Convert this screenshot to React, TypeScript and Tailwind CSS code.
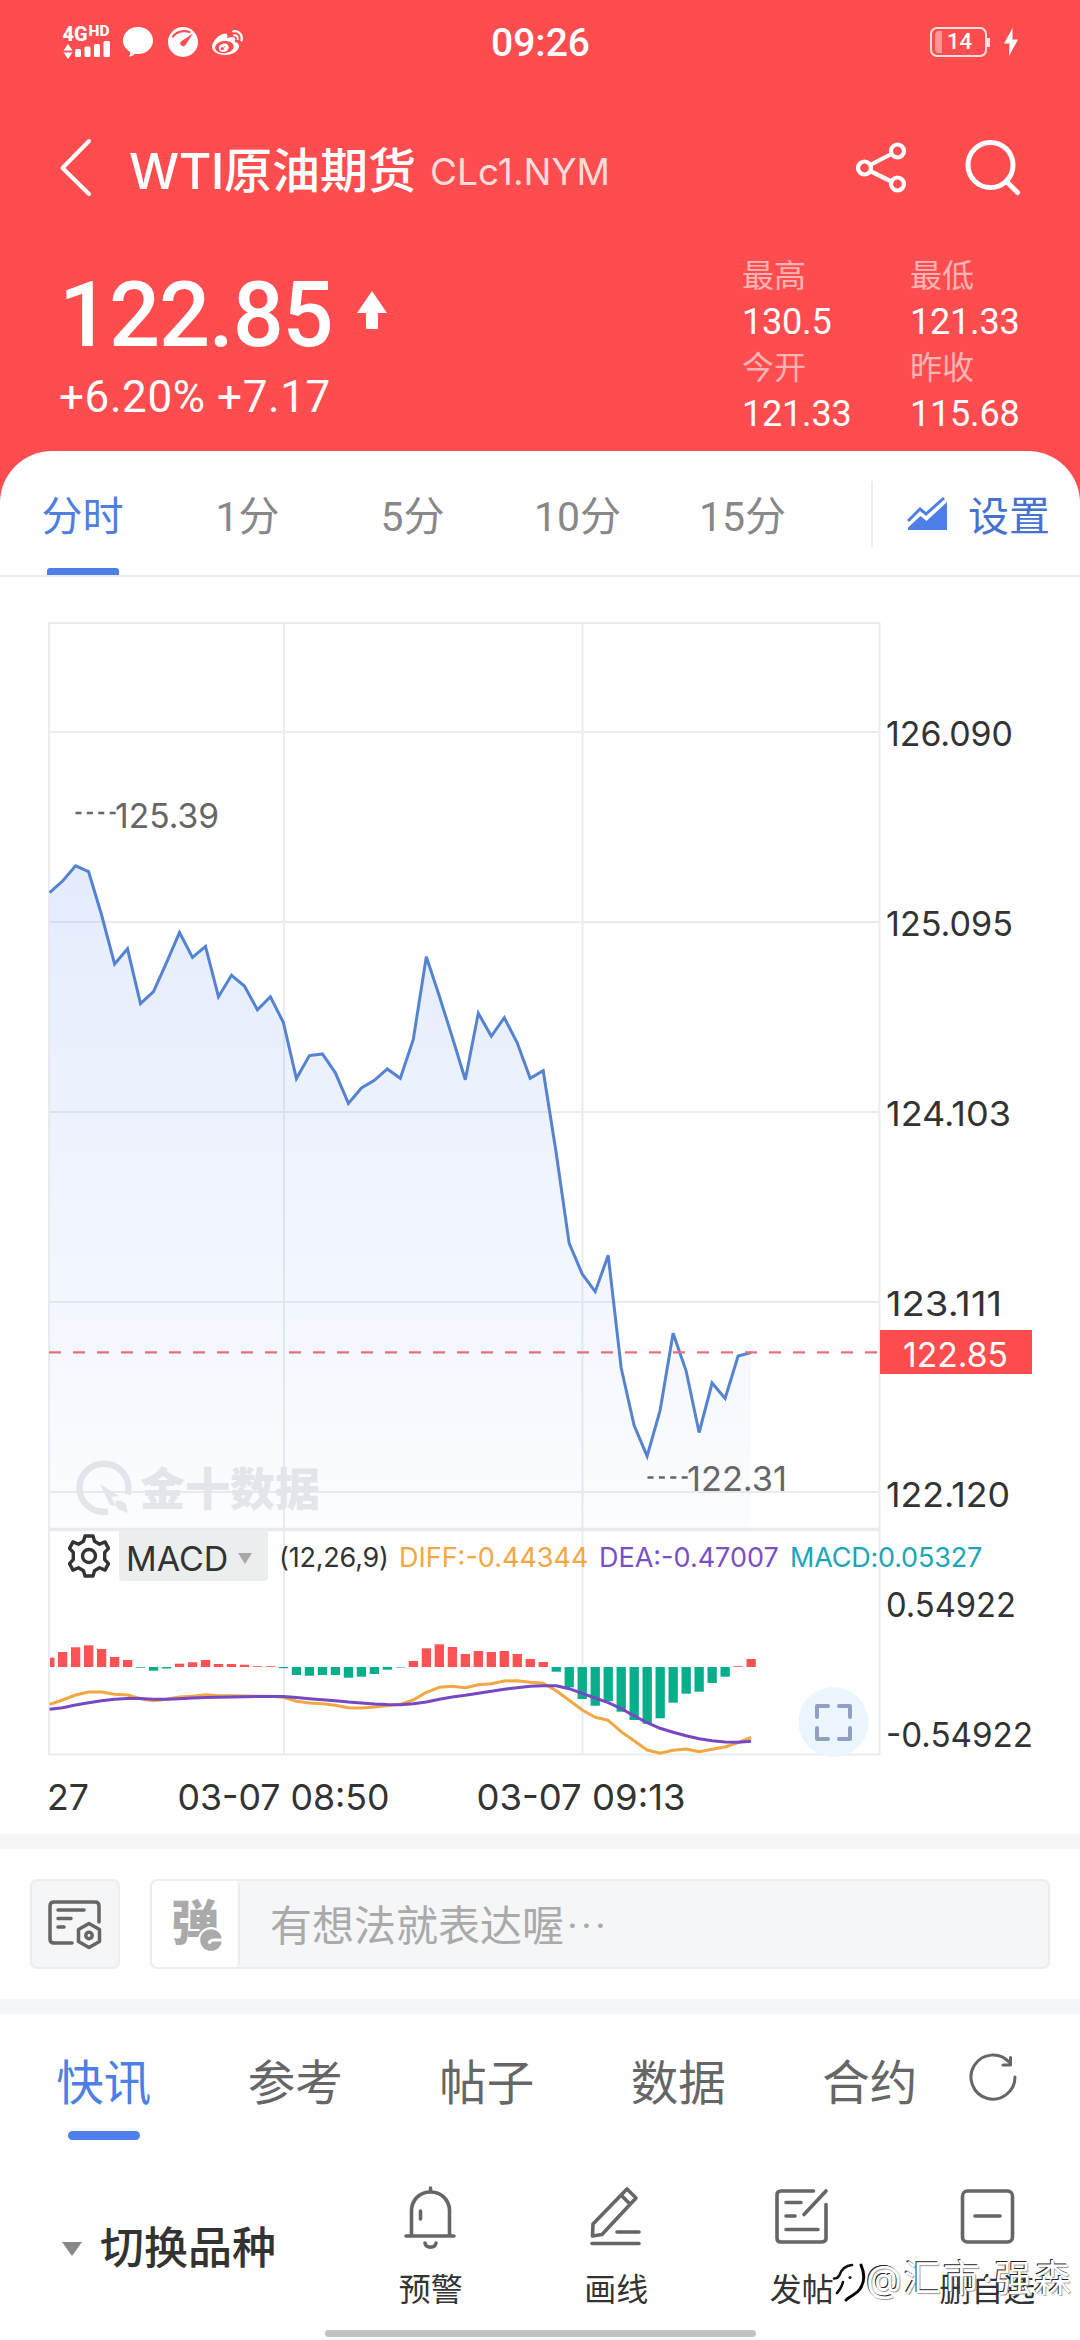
import React from "react";
import { FaWeibo } from "react-icons/fa";

const STEP = 12.99;
const X0 = 49.6;
const BASE = 1667;

const prices = [
    892.7, 881, 865.8, 871.7, 915, 964, 948.8, 1003.6, 991.5, 962.6, 932.6, 957.4, 946.4, 996.7,
    975.3, 986, 1009.8, 996.7, 1022.5, 1078.6, 1055.6, 1053.9, 1072.8, 1103.4, 1088, 1080.4, 1069,
    1078.3, 1039.4, 956.7, 996, 1037.3, 1079.7, 1013.2, 1036.3, 1017.7, 1042.8, 1078.3, 1070.7,
    1153, 1243.4, 1273.9, 1291.7, 1255.3, 1368, 1425.3, 1456.2, 1410.3, 1333.2, 1370.8, 1432.5,
    1383, 1398.5, 1356.1, 1352.6,
];

const bars = [
    9.3, 15, 19.7, 21.7, 18, 10, 7, -0.7, -3.7, -1.5, 3.3, 4.7, 7, 3, 3, 2.3, 0.8, 0.8, -1.2, -8,
    -8.7, -8, -8, -10.7, -9.7, -7, -2.7, -0.5, 6, 18.7, 22.7, 20, 13, 16, 15, 16, 13, 8, 5, -4.7,
    -20.3, -32, -38.7, -34.3, -44.7, -53, -56.7, -51.3, -35.7, -26.7, -24.7, -16, -9.7, 0.8, 8,
];

const diff = [
    1704.3, 1700, 1695, 1692, 1692, 1694.3, 1695, 1698.7, 1700.7, 1699.3, 1697, 1696.3, 1694.7,
    1695.7, 1695.7, 1696, 1696.3, 1696.3, 1697.3, 1701.3, 1703, 1703.7, 1705.3, 1707.7, 1708, 1707,
    1705.7, 1704.3, 1700, 1692.3, 1687.3, 1686.3, 1687.7, 1684.7, 1683.7, 1681, 1680.7, 1682.3,
    1683.3, 1690.7, 1700.3, 1710, 1717.3, 1720.3, 1731.7, 1740.7, 1750, 1753.3, 1750.3, 1749,
    1751.7, 1749.3, 1747, 1742.7, 1737.3,
];

const dea = [
    1709.3, 1707.7, 1705, 1702.7, 1700.7, 1699.3, 1698.5, 1698.6, 1699.3, 1699.3, 1698.7, 1698,
    1697.5, 1697.3, 1697, 1696.7, 1696.5, 1696.4, 1696.5, 1697.5, 1698.7, 1699.7, 1700.7, 1702,
    1703, 1704, 1704.5, 1704.7, 1703.7, 1702, 1699.3, 1697, 1695.3, 1693.3, 1691.3, 1689.3, 1687.7,
    1686.3, 1685.7, 1685.7, 1688.7, 1693.3, 1698, 1702.7, 1708.7, 1715.7, 1722.7, 1728.3, 1732.3,
    1735.7, 1738.7, 1740.7, 1742, 1742.3, 1741.3,
];

const axisLabels = [
    { text: "126.090", y: 746, w: 127 },
    { text: "125.095", y: 936, w: 127 },
    { text: "124.103", y: 1126, w: 125 },
    { text: "123.111", y: 1316, w: 116 },
    { text: "122.120", y: 1506.5, w: 124 },
    { text: "0.54922", y: 1616.5, w: 130 },
    { text: "-0.54922", y: 1746.5, w: 147 },
];

const stats = [
    { label: "最高", value: "130.5" },
    { label: "最低", value: "121.33" },
    { label: "今开", value: "121.33" },
    { label: "昨收", value: "115.68" },
];

const periods = ["分时", "1分", "5分", "10分", "15分"];
const sections = ["快讯", "参考", "帖子", "数据", "合约"];

const toPoints = (ys: number[]) => ys.map((y, i) => `${(X0 + i * STEP).toFixed(1)},${y}`).join(" ");

function StatusBar() {
    return (
        <div className="flex h-[84px] items-center justify-between pr-[61px] pl-[62px]">
            <div className="flex w-[370px] items-center">
                <svg className="overflow-visible" width="50" height="36" viewBox="62 23 50 36" fill="#fff">
                    <text x="62.5" y="39.5" fontSize="20" fontWeight="800" textLength="25" lengthAdjust="spacingAndGlyphs">4G</text>
                    <text x="88.5" y="35" fontSize="14" fontWeight="800" textLength="21" lengthAdjust="spacingAndGlyphs">HD</text>
                    <path d="M63.500 49.500 68 43l4.500 6.500zM63.500 51.500h9L68 58z" />
                    <rect x="75" y="48" width="6" height="8" rx="1.500" />
                    <rect x="84.500" y="45.500" width="6" height="10.500" rx="1.500" />
                    <rect x="94" y="43" width="6" height="13" rx="1.500" />
                    <rect x="103.500" y="40" width="6.500" height="16" rx="1.500" />
                </svg>
                <svg className="ml-[10px]" width="32" height="32" viewBox="122 26 32 32" fill="#fff">
                    <path d="M138 27c8.500 0 15 6 15 13.500S146.500 54 138 54c-1 0-2-.1-3-.3-1.500 1.500-3.500 2.600-6 2.800.8-1.500 1.300-3 1.300-4.600-4.500-2.400-7.300-6.500-7.300-11.400C123 33 129.500 27 138 27z" />
                </svg>
                <svg className="ml-[13px]" width="32" height="32" viewBox="167 26 32 32">
                    <circle cx="183" cy="42" r="15" fill="#fff" />
                    <path d="M173 36.500c3-4.500 10-6.500 16.500-4.500" fill="none" stroke="#ff4d4f" strokeWidth="2.200" strokeLinecap="round" />
                    <path d="M193 33.500 185.500 45a2.800 2.800 0 0 1-4.500-3.600z" fill="#ff4d4f" />
                </svg>
                <FaWeibo className="mt-[2px] ml-[13px] text-white" size={31} />
            </div>
            <div className="pt-[2px] text-[39px] leading-none font-medium text-white">09:26</div>
            <div className="flex w-[370px] items-center justify-end">
                <div className="flex h-[30px] w-[57px] items-center rounded-[7px] border-[2.500px] border-[#ffe0dc] pl-[3px]">
                    <div className="h-[22px] w-[7px] rounded-l-sm bg-[#ff9697]" />
                    <div className="ml-[5px] text-[22px] leading-none font-medium text-white">14</div>
                </div>
                <div className="mr-[13px] h-[9px] w-[3px] bg-[#ffe0dc]" />
                <svg width="16" height="28" viewBox="0 0 16 28" fill="#fff">
                    <path d="M9.500 0 1 15.500h5.500L6 28l9-16.500H9.500z" />
                </svg>
            </div>
        </div>
    );
}

function Header() {
    return (
        <div className="h-[501px] bg-[#ff4d4f]">
            <StatusBar />
            <div className="flex h-[168px] items-center pl-[58px]">
                <svg width="36" height="60" viewBox="0 0 36 60" fill="none" stroke="#fff" strokeWidth="4" strokeLinecap="round" strokeLinejoin="round">
                    <path d="M31 3 4.500 30 31 56" />
                </svg>
                <div className="mt-[7px] ml-[35px] flex items-center whitespace-nowrap text-white">
                    <span className="w-[95px] font-['Inter'] text-[50px] font-medium tracking-[-0.5px]">WTI</span>
                    <span className="text-[48px] font-medium">原油期货</span>
                    <span className="ml-[14px] font-['Inter'] text-[37px] text-[#ffdcda]">CLc1.NYM</span>
                </div>
                <svg className="ml-auto" width="52" height="54" viewBox="855 141 52 54" fill="none" stroke="#fff" strokeWidth="4.200">
                    <circle cx="864.500" cy="168" r="6.500" />
                    <circle cx="897.500" cy="151" r="6.500" />
                    <circle cx="897.500" cy="184" r="6.500" />
                    <path d="m870 165 21.500-11M870 171l21.500 10.500" />
                </svg>
                <svg className="mr-[57px] ml-[58px]" width="58" height="58" viewBox="965 139 58 58" fill="none" stroke="#fff" strokeWidth="5" strokeLinecap="round">
                    <circle cx="990.500" cy="165" r="22.500" />
                    <path d="m1007 182 10.500 10.500" />
                </svg>
            </div>
            <div className="flex justify-between pt-[2px]">
                <div className="pl-[59px] text-white">
                    <div className="flex h-[122px] items-center pt-[2px]">
                        <span className="text-[90px] leading-none font-medium tracking-[-1.200px]">122.85</span>
                        <svg className="mb-[12px] ml-[23px]" width="32" height="38" viewBox="0 0 32 38" fill="#fff">
                            <path d="M16 0 31 22H22v15a1 1 0 0 1-1 1H11a1 1 0 0 1-1-1V22H1z" />
                        </svg>
                    </div>
                    <div className="flex h-[42px] items-center text-[44px] tracking-[0.600px]">+6.20% +7.17</div>
                </div>
                <div className="-mt-px grid w-[338px] grid-cols-[168px_170px]">
                    {stats.map((s) => (
                        <div key={s.label} className="flex h-[92px] flex-col">
                            <span className="text-[32px] leading-[46px] text-[#ffb4b3]">{s.label}</span>
                            <span className="text-[36px] leading-[46px] tracking-[-0.200px] text-white">{s.value}</span>
                        </div>
                    ))}
                </div>
            </div>
        </div>
    );
}

function PeriodTabs() {
    return (
        <div className="flex h-[126px] border-b-2 border-[#ebebeb]">
            {periods.map((p, i) => (
                <div key={p} className="flex w-[165px] flex-col items-center">
                    <span className={`mt-[36px] h-[60px] text-[41px] leading-[60px] ${i === 0 ? "text-[#4d7fe0]" : "text-[#888]"}`}>{p}</span>
                    {i === 0 && <span className="mt-auto h-[7px] w-[72px] rounded-t-[3px] bg-[#4d7fe6]" />}
                </div>
            ))}
            <div className="mt-[30px] ml-[46px] h-[66px] w-[2px] bg-[#ececec]" />
            <svg className="mt-[46px] ml-[34px]" width="41" height="34" viewBox="907 497 41 34">
                <path d="m908 521 12-12 6 5 18-16" fill="none" stroke="#4d7fe6" strokeWidth="3" />
                <path d="M908 530v-2.500l12.500-11.500 6 5L947 502v28z" fill="#4d7fe6" />
            </svg>
            <span className="mt-[36px] ml-[20px] h-[60px] text-[41px] leading-[60px] text-[#4672cf]">设置</span>
        </div>
    );
}

function MacdBar() {
    return (
        <div className="absolute top-[954px] left-[50px] flex h-[50px] items-center font-['Inter'] whitespace-nowrap">
            <svg className="ml-[18px]" width="42" height="44" viewBox="-21 -22 42 44" fill="none" stroke="#333" strokeWidth="3.400" strokeLinejoin="round">
                <path d="M-4-20h8l1.500 5.200 5 3 5.500-2.300 3.500 6.500-3.800 4v7.200l3.800 4-3.500 6.500-5.500-2.300-5 3L4 20h-8l-1.500-5.200-5-3-5.500 2.300-3.500-6.500 3.800-4v-7.200l-3.800-4 3.500-6.500 5.500 2.300 5-3z" />
                <circle r="6.500" />
            </svg>
            <div className="ml-[9px] flex h-[50px] w-[149px] items-center rounded-b-sm bg-[#eaeeef] pt-[4px] pl-[7px] text-[34px] text-[#333]">
                <span className="w-[104px]">MACD</span>
                <svg className="ml-[8px]" width="14" height="11" viewBox="0 0 14 11" fill="#a8a8a8">
                    <path d="M0 0h14L7 11z" />
                </svg>
            </div>
            <span className="ml-[11px] w-[120px] pt-[4px] text-[27px] tracking-[-0.200px] text-[#333]">(12,26,9)</span>
            <span className="w-[200px] pt-[4px] text-[27px] text-[#f2a742]">DIFF:-0.44344</span>
            <span className="w-[191px] pt-[4px] text-[27px] text-[#7a4fc6]">DEA:-0.47007</span>
            <span className="pt-[4px] text-[27px] tracking-[-0.200px] text-[#1aa6b8]">MACD:0.05327</span>
        </div>
    );
}

function Chart() {
    const lastX = X0 + (prices.length - 1) * STEP;
    return (
        <div className="relative h-[1257px]">
            <svg width="1080" height="1257" viewBox="0 577 1080 1257" className="block">
                <defs>
                    <linearGradient id="area" x1="0" y1="866" x2="0" y2="1530" gradientUnits="userSpaceOnUse">
                        <stop offset="0" stopColor="#4a80ee" stopOpacity="0.150" />
                        <stop offset="1" stopColor="#4a80ee" stopOpacity="0.020" />
                    </linearGradient>
                </defs>
                <g stroke="#ebecef" strokeWidth="2" fill="none">
                    <path d="M49 623H879.500V1754.500H49z" />
                    <path d="M49 732H879M49 922H879M49 1112H879M49 1302H879M49 1492H879" />
                    <path d="M284 623V1754M582.500 623V1754" />
                    <path d="M49 1529.500H879" strokeWidth="3.500" />
                </g>
                <g fill="#e7e8ea">
                    <path d="M108 1511.500a24.500 24 0 1 1 19.500-17" fill="none" stroke="#e7e8ea" strokeWidth="6.500" />
                    <path d="m100 1484 19 12-8 1 5 9-6-1z" />
                    <path d="M116 1501c4-1 9 1 10 4l2 8-8-3c-4-2-5-5-4-9z" />
                    <text x="140" y="1506" fontSize="45" fontWeight="900">金十数据</text>
                </g>
                <polygon points={`${X0},1530 ${toPoints(prices)} ${lastX},1530`} fill="url(#area)" />
                <polyline points={toPoints(prices)} fill="none" stroke="#5583d2" strokeWidth="3" />
                <path d="M49 1352.300H879" stroke="#e66f79" strokeWidth="2.200" strokeDasharray="12 12" />

                {bars.map((b, i) => {
                    const x = i === 0 ? 50 : X0 + i * STEP - 4.6;
                    return (
                        <rect key={i} x={x} y={b > 0 ? BASE - b : BASE} width={i === 0 ? 4.500 : 9.300} height={Math.abs(b)} fill={b > 0 ? "#fc5254" : "#06ae8b"} />
                    );
                })}
                <polyline points={toPoints(diff)} fill="none" stroke="#f2a742" strokeWidth="3" strokeLinejoin="round" />
                <polyline points={toPoints(dea)} fill="none" stroke="#7648c4" strokeWidth="3" strokeLinejoin="round" />

                <g stroke="#666" strokeWidth="2.500" strokeDasharray="6 5.400">
                    <path d="M75.500 813H116" />
                    <path d="M647.500 1477.500H688" />
                </g>
                <g className="font-['Inter']">
                    <g fill="#666" fontSize="34">
                        <text x="115" y="828" textLength="104" lengthAdjust="spacingAndGlyphs">125.39</text>
                        <text x="687" y="1491" textLength="100" lengthAdjust="spacingAndGlyphs">122.31</text>
                    </g>
                    <g fill="#333" fontSize="34">
                        {axisLabels.map((l) => (
                            <text key={l.text} x="886" y={l.y} textLength={l.w} lengthAdjust="spacingAndGlyphs">{l.text}</text>
                        ))}
                    </g>
                    <rect x="880" y="1330" width="152" height="44" fill="#ff4d4f" />
                    <text x="903" y="1366.500" fontSize="34" fill="#fff" textLength="105" lengthAdjust="spacingAndGlyphs">122.85</text>
                    <g fill="#333" fontSize="36">
                        <text x="47" y="1810" textLength="42" lengthAdjust="spacingAndGlyphs">27</text>
                        <text x="177.500" y="1810" textLength="212" lengthAdjust="spacingAndGlyphs">03-07 08:50</text>
                        <text x="476.500" y="1810" textLength="209" lengthAdjust="spacingAndGlyphs">03-07 09:13</text>
                    </g>
                </g>
                <circle cx="833.500" cy="1722" r="35" fill="#ebf5fe" />
                <path d="M817 1717V1706h11M839 1706h11v11M850 1728v11H839M828 1739H817V1728" fill="none" stroke="#91a0bf" strokeWidth="4" strokeLinecap="round" strokeLinejoin="round" />
            </svg>
            <MacdBar />
        </div>
    );
}

function CommentBar() {
    return (
        <div className="flex h-[150px] items-center pr-[30px] pl-[30px]">
            <div className="flex h-[90px] w-[90px] items-center justify-center rounded-[7px] border-2 border-[#ebedf0] bg-[#f4f6f8]">
                <svg className="mt-[2px]" width="56" height="52" viewBox="48 1901 56 52" fill="none" stroke="#666" strokeWidth="3.500" strokeLinecap="round" strokeLinejoin="round">
                    <path d="M100 1924V1908q0-4-4-4H55q-4 0-4 4v33q0 4 4 4h18" />
                    <path d="M59 1912h26M59 1920.500h13M59 1929h6" />
                    <path d="m90 1925.500 10.500 6v12L90 1949.500l-10.500-6v-12z" />
                    <circle cx="90" cy="1937.500" r="3.200" />
                </svg>
            </div>
            <div className="ml-[30px] flex h-[90px] flex-1 items-center rounded-[7px] border-2 border-[#ebedf0] bg-[#f4f6f8]">
                <div className="relative flex h-full w-[88px] items-center justify-center rounded-[5px] border-r-2 border-[#ebedf0] bg-white">
                    <span className="text-[48px] leading-[72px] font-black text-[#aaa]">弹</span>
                    <svg className="absolute top-[45px] left-[46px]" width="28" height="28" viewBox="0 0 28 28">
                        <circle cx="13" cy="14" r="13" fill="#fff" />
                        <circle cx="13" cy="14" r="10.800" fill="#aaa" />
                        <path d="M25 14h-9q-4 0-5 3.500" fill="none" stroke="#fff" strokeWidth="3" />
                    </svg>
                </div>
                <span className="mt-[4px] ml-[30px] text-[42px] text-[#aaa]">
                    有想法就表达喔<span className="ml-[3px] tracking-[3px]">···</span>
                </span>
            </div>
        </div>
    );
}

function SectionTabs() {
    return (
        <div className="flex h-[150px] pl-[8px]">
            {sections.map((s, i) => (
                <div key={s} className="flex w-[191.500px] flex-col items-center">
                    <span className={`mt-[35px] h-[70px] text-[47.500px] leading-[70px] ${i === 0 ? "text-[#4d7fe6]" : "text-[#666]"}`}>{s}</span>
                    {i === 0 && <span className="mt-[12px] h-[9px] w-[72px] rounded-full bg-[#4d80ea]" />}
                </div>
            ))}
            <svg className="mt-[37px] ml-[1px]" width="52" height="52" viewBox="967 2051 52 52" fill="none" stroke="#666" strokeWidth="3" strokeLinecap="round" strokeLinejoin="round">
                <path d="M1015 2077a22 22 0 1 1-5.500-14.500" />
                <path d="M1010.500 2057.500v7.500h-7.500" />
            </svg>
        </div>
    );
}

const actions = [
    {
        label: "预警",
        icon: (
            <>
                <path d="M9.500 51V26c0-11 8-19 19-19s19 8 19 19v25M4 51h48M28.500 3v4M18.500 26v8" />
                <path d="M23 58c1 5.500 10 5.500 11 0" />
            </>
        ),
    },
    {
        label: "画线",
        icon: (
            <>
                <path d="m4.500 51 .5-12L39 4l9 9-34 36.500zM33 10l9 9" />
                <path d="M29 47h22M4 58.500h47" />
            </>
        ),
    },
    {
        label: "发帖",
        icon: (
            <>
                <path d="M40.500 6H8q-4 0-4 4v43q0 4 4 4h40q5 0 5-4V19.500" />
                <path d="M13 17.500h15M13 31h9M13 44.500h32M31 29.500 53 6" />
            </>
        ),
    },
    {
        label: "删自选",
        icon: (
            <>
                <rect x="3.500" y="6" width="50" height="51" rx="5" />
                <path d="M16 31h25" />
            </>
        ),
    },
];

function BottomBar() {
    return (
        <div className="relative flex h-[176px]">
            <div className="flex w-[338px] items-center pb-[7px] pl-[62px]">
                <svg width="20" height="14" viewBox="0 0 20 14" fill="#888">
                    <path d="M0 0h20L10 14z" />
                </svg>
                <span className="ml-[18px] text-[44px] font-medium text-[#333]">切换品种</span>
            </div>
            {actions.map((a) => (
                <div key={a.label} className="flex w-[185.500px] flex-col items-center pt-[21px]">
                    <svg width="57" height="64" viewBox="0 0 57 64" fill="none" stroke="#666" strokeWidth="3.600" strokeLinecap="round" strokeLinejoin="round">
                        {a.icon}
                    </svg>
                    <span className="mt-[17px] text-[32px] leading-[48px] text-[#333]">{a.label}</span>
                </div>
            ))}
            <div className="absolute top-[88px] left-[830px] flex items-center">
                <svg width="36" height="54" viewBox="830 2254 36 54" fill="none" strokeLinecap="round">
                    <path d="M841 2297c5-9 5-18 9-23 4-3 8-2 8 4 0 8-3 14-10 20" stroke="#fff" strokeWidth="7" />
                    <path d="M834 2280.500q4 0 5.500-3.500 3-9 12.500-10M843 2284q-2 7-6 11" stroke="#111" strokeWidth="2.600" />
                    <path d="M861 2267c4 9 3 18-1 24-4 6-9 6-14 11" stroke="#000" strokeWidth="3" />
                    <circle cx="850" cy="2279.500" r="1.500" fill="#111" />
                </svg>
                <span className="font-['Inter','Noto_Sans_CJK_SC'] text-[37px] leading-[44px] tracking-[2.100px] whitespace-nowrap text-white [text-shadow:-1px_-1px_0.500px_#222,1px_1px_1px_#999]">@汇市·强森</span>
            </div>
            <div className="absolute top-[166px] left-[325px] h-[7px] w-[431px] rounded-full bg-[#c2c2c2]" />
        </div>
    );
}

export default function App() {
    return (
        <div className="h-[2340px] w-[1080px] overflow-hidden bg-white font-['Roboto','Noto_Sans_CJK_SC',sans-serif]">
            <Header />
            <div className="-mt-[50px] rounded-t-[52px] bg-white">
                <PeriodTabs />
                <Chart />
            </div>
            <div className="h-[15px] bg-[#f6f6f6]" />
            <CommentBar />
            <div className="h-[15px] bg-[#f4f6f8]" />
            <SectionTabs />
            <BottomBar />
        </div>
    );
}
